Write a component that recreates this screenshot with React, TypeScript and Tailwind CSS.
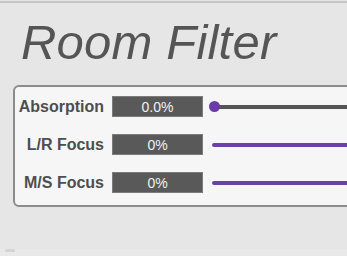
const rows = [
  { label: 'Absorption', value: '0.0%', mode: 'dot' },
  { label: 'L/R Focus', value: '0%', mode: 'full' },
  { label: 'M/S Focus', value: '0%', mode: 'full' },
];

function Slider({ mode }: { mode: string }) {
  if (mode === 'dot') {
    return (
      <div className="relative flex h-[21px] flex-1 items-center pl-[2px]">
        <div className="h-[4px] flex-1 rounded-l-full bg-[#545454]" />
        <div className="absolute left-[-3px] top-[5px] h-[11px] w-[11px] rounded-full bg-[#6a3da8]" />
      </div>
    );
  }
  return (
    <div className="flex h-[21px] flex-1 items-center pt-px">
      <div className="h-[4px] flex-1 rounded-l-full bg-[#6a42a6]" />
    </div>
  );
}

export default function App() {
  return (
    <div className="h-[256px] w-[347px] overflow-hidden bg-[#e6e6e6] font-['Liberation_Sans',Arial,sans-serif]">
      <div className="mt-px h-[2px] bg-[#c6c6c6]" />
      <h1 className="ml-[21px] mt-[15px] text-[49px] italic leading-[48px] tracking-[0.2px] text-[#555555]">
        Room Filter
      </h1>
      <div className="ml-[13px] mt-[19px] flex h-[122px] w-[420px] flex-col gap-[17px] rounded-[6px] border-2 border-[#8c8c8c] bg-[#f6f6f6] pb-[10px] pt-[9px]">
        {rows.map((r) => (
          <div key={r.label} className="flex items-center">
            <div className="w-[89px] text-right text-[16px] font-bold leading-[21px] text-[#4e4e4e]">
              {r.label}
            </div>
            <div className="ml-[8px] flex h-[21px] w-[91px] items-center justify-center border border-[#7c7c7c] bg-[#595959] text-[14px] leading-none text-[#f0f0f0]">
              {r.value}
            </div>
            <div className="ml-[9px] flex flex-1">
              <Slider mode={r.mode} />
            </div>
          </div>
        ))}
      </div>
      <div className="mt-[42px] h-[8px] bg-[#e9e9e9]">
        <div className="ml-[5px] mt-[5px] h-[3px] w-[10px] rounded-t-[2px] bg-[#d4d4d4]" />
      </div>
    </div>
  );
}
